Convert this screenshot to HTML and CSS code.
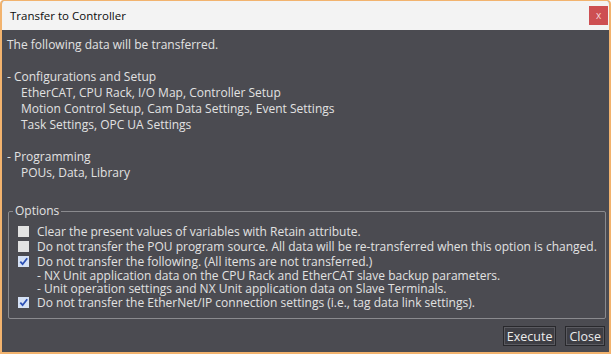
FILE: index.html
```html
<!DOCTYPE html>
<html lang="en">
<head>
    <meta charset="UTF-8">
    <title>Transfer to Controller</title>
    <link rel="stylesheet" href="styles.css">
</head>
<body>
    <div class="window">
        <div class="titlebar">
            <span class="title">Transfer to Controller</span>
            <button class="close-x">x</button>
        </div>
        <div class="content">
            <div class="intro">The following data will be transferred.</div>

            <div class="list">
                <div>- Configurations and Setup</div>
                <div class="sub">EtherCAT, CPU Rack, I/O Map, Controller Setup</div>
                <div class="sub">Motion Control Setup, Cam Data Settings, Event Settings</div>
                <div class="sub">Task Settings, OPC UA Settings</div>
                <div class="gap"></div>
                <div>- Programming</div>
                <div class="sub">POUs, Data, Library</div>
            </div>

            <fieldset class="options">
                <legend>Options</legend>
                <label class="opt"><span class="box"></span>Clear the present values of variables with Retain attribute.</label>
                <label class="opt"><span class="box"></span>Do not transfer the POU program source. All data will be re-transferred when this option is changed.</label>
                <label class="opt"><span class="box checked"><svg viewBox="0 0 11 11"><path d="M2.3 5.6 L4.6 8.2 L9.2 2.2" /></svg></span>Do not transfer the following. (All items are not transferred.)</label>
                <div class="note">- NX Unit application data on the CPU Rack and EtherCAT slave backup parameters.</div>
                <div class="note">- Unit operation settings and NX Unit application data on Slave Terminals.</div>
                <label class="opt"><span class="box checked"><svg viewBox="0 0 11 11"><path d="M2.3 5.6 L4.6 8.2 L9.2 2.2" /></svg></span>Do not transfer the EtherNet/IP connection settings (i.e., tag data link settings).</label>
            </fieldset>

            <div class="buttons">
                <button class="btn">Execute</button>
                <button class="btn">Close</button>
            </div>
        </div>
    </div>
</body>
</html>
```

FILE: styles.css
```css
body { margin: 0; font-family: "Open Sans", "Liberation Sans", sans-serif; font-size: 12px; }
.window {
    width: 611px;
    height: 354px;
    box-sizing: border-box;
    border: 2px solid #f2b36e;
    border-top-width: 1px;
    border-radius: 4px 4px 0 0;
    background: #4b4b51;
    display: flex;
    flex-direction: column;
    overflow: hidden;
}
.titlebar {
    height: 29px;
    background: #f3f3f3;
    display: flex;
    align-items: center;
    justify-content: space-between;
    padding: 0 1px 0 8px;
}
.title { color: #0c0c0c; font-size: 11.5px; }
.close-x {
    width: 19px;
    height: 19px;
    border: none;
    padding: 0;
    background: #cd4f52;
    color: #f6d6d6;
    font-size: 10px;
    font-family: inherit;
    line-height: 17px;
}
.content {
    flex: 1;
    color: #e2e2e2;
    padding: 7px 3px 0 5px;
    display: flex;
    flex-direction: column;
}
.intro { line-height: 16px; }
.list { margin-top: 16px; line-height: 16px; }
.list .sub { padding-left: 14px; }
.list .gap { height: 16px; }
.options {
    margin: 23px 0 0 1px;
    padding: 6px 0 8px 9px;
    border: 1px solid #8a8a8e;
    border-radius: 2px;
    min-width: 0;
}
.options legend { padding: 0 2px; margin-left: -5px; line-height: 14px; }
.opt { display: flex; align-items: center; height: 15px; }
.box {
    width: 11px;
    height: 11px;
    background: #e3e3e3;
    margin-right: 8px;
    flex-shrink: 0;
    display: flex;
}
.box.checked { background: #d5e1f5; }
.box svg { width: 11px; height: 11px; }
.box path { fill: none; stroke: #2a4fb5; stroke-width: 1.8; }
.note { padding-left: 19px; line-height: 13px; }
.buttons {
    display: flex;
    justify-content: flex-end;
    gap: 9px;
    margin-top: 7px;
    padding-right: 1px;
}
.btn {
    height: 20px;
    padding: 0 3px;
    font-family: inherit;
    font-size: 12.5px;
    color: #ececec;
    background: #3e3e44;
    border: 1px solid #28282c;
    box-shadow: inset 0 0 0 1px #5a5a60;
}
```
